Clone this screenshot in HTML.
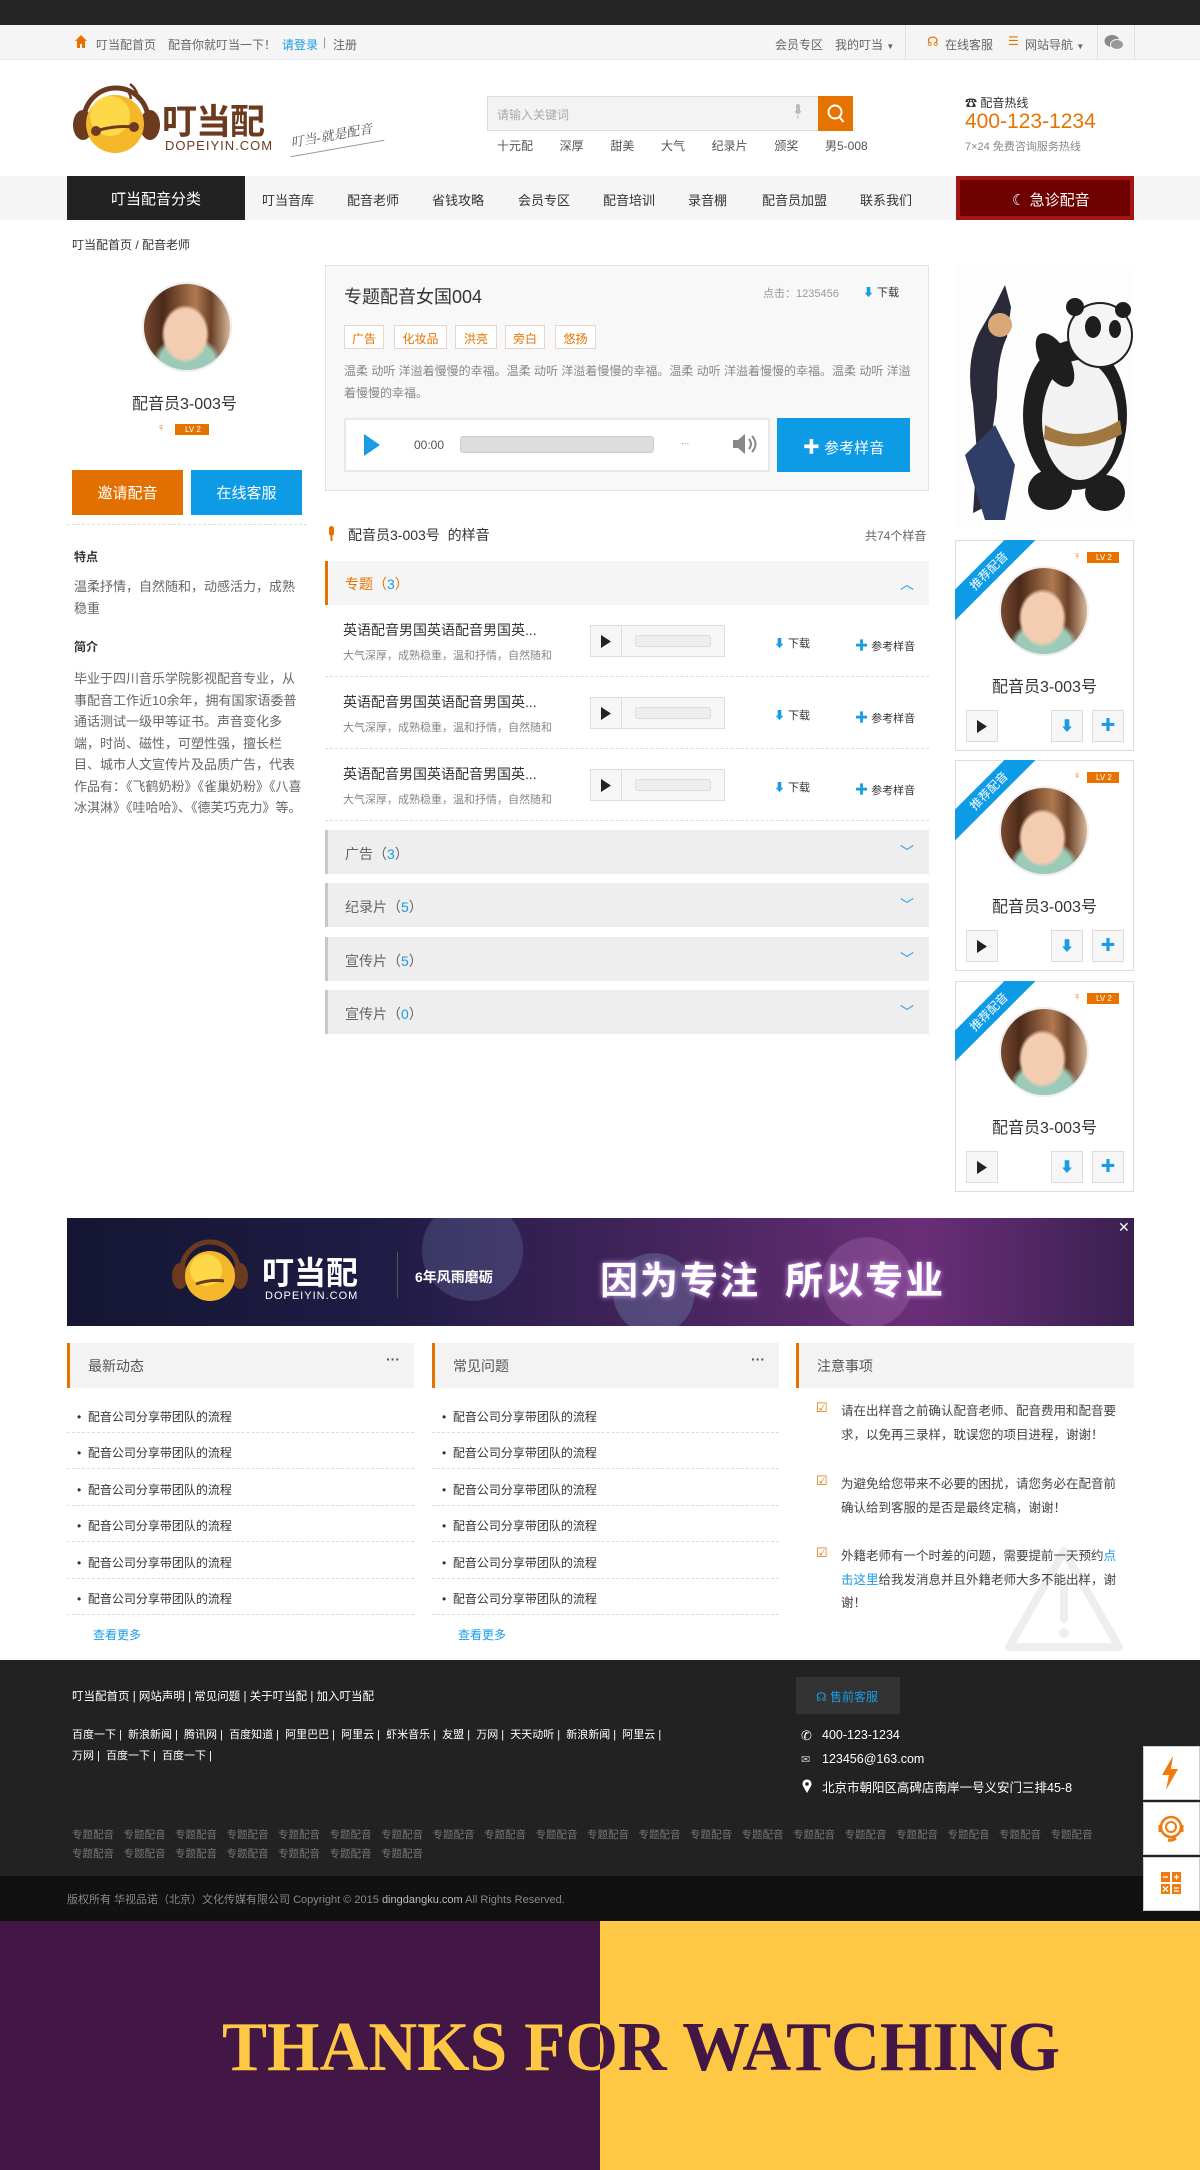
<!DOCTYPE html>
<html><head><meta charset="utf-8">
<style>
*{margin:0;padding:0;box-sizing:border-box}
body{width:1200px;height:2170px;position:relative;overflow:hidden;background:#fff;font-family:"Liberation Sans","Noto Sans CJK SC",sans-serif;color:#333;font-size:12px}
.a{position:absolute;white-space:nowrap}
.av{position:absolute;border-radius:50%;border:2px solid #eee;background:radial-gradient(ellipse 28% 34% at 48% 58%,#f3cdb2 85%,transparent 100%),radial-gradient(ellipse 40% 30% at 50% 90%,#9ccab8 80%,transparent 100%),linear-gradient(90deg,#7a4a30,#4a2a1a 22%,#8a5a3a 45%,#b07a50 60%,#6a4028 78%,#d8b898)}
.blue{color:#1a9be6}
.org{color:#e67300}
.row{position:absolute;left:325px;width:604px;height:72px;border-bottom:1px dashed #ddd}
.sec{position:absolute;left:325px;width:604px;height:44px;background:#eee;border-left:3px solid #c8c8c8;font-size:14px;color:#666;padding:14px 0 0 17px}
.card{position:absolute;left:955px;width:179px;height:211px;border:1px solid #ddd;overflow:hidden;background:#fff}
.btn{position:absolute;width:32px;height:32px;border:1px solid #ddd;background:#f6f6f6;top:170px}
.li{position:absolute;height:36px;border-bottom:1px dashed #ddd;font-size:12px;color:#333;padding-top:11px}
.tg{display:inline-block;width:51.5px;font-size:10.5px;color:#777}
</style></head><body>
<div class="a" style="left:0;top:0;width:1200px;height:25px;background:#262626"></div>
<div class="a" style="left:0;top:25px;width:1200px;height:35px;background:#f5f5f5;border-bottom:1px solid #e8e8e8"></div>
<svg class="a" style="left:75px;top:35px" width="12" height="13" viewBox="0 0 12 13"><path d="M6 0L0 6h2v7h3V9h2v4h3V6h2z" fill="#e67300"/></svg>
<div class="a" style="left:96px;top:36px;color:#666">叮当配首页</div>
<div class="a" style="left:168px;top:36px;color:#666">配音你就叮当一下！</div>
<div class="a" style="left:282px;top:36px;color:#1a9be6">请登录</div>
<div class="a" style="left:323px;top:35px;color:#999">|</div>
<div class="a" style="left:333px;top:36px;color:#666">注册</div>
<div class="a" style="left:775px;top:36px;color:#666">会员专区</div>
<div class="a" style="left:835px;top:36px;color:#666">我的叮当 <span style="font-size:8px">▼</span></div>
<div class="a" style="left:905px;top:25px;width:1px;height:35px;background:#e0e0e0"></div>
<div class="a" style="left:927px;top:34px;color:#e67300;font-size:13px">☊</div>
<div class="a" style="left:945px;top:36px;color:#666">在线客服</div>
<div class="a" style="left:1008px;top:34px;color:#e67300;font-size:12px">☰</div>
<div class="a" style="left:1025px;top:36px;color:#666">网站导航 <span style="font-size:8px">▼</span></div>
<div class="a" style="left:1097px;top:25px;width:1px;height:35px;background:#e0e0e0"></div>
<svg class="a" style="left:1104px;top:34px" width="20" height="17" viewBox="0 0 20 17"><ellipse cx="8" cy="7" rx="7.5" ry="6" fill="#888"/><ellipse cx="13" cy="10.5" rx="6.5" ry="5" fill="#999" stroke="#f5f5f5"/></svg>
<div class="a" style="left:1134px;top:25px;width:1px;height:35px;background:#e0e0e0"></div>

<svg class="a" style="left:70px;top:80px" width="140" height="76" viewBox="0 0 140 76">
<path d="M60 4 q8 6 8 16 M55 8 q5 4 6 11" stroke="#6b3a1f" stroke-width="2.5" fill="none"/>
<path d="M14 40 A32 32 0 0 1 78 40" stroke="#6b3a1f" stroke-width="5" fill="none"/>
<ellipse cx="13" cy="45" rx="10" ry="15" fill="#6b3a1f"/>
<ellipse cx="80" cy="45" rx="10" ry="15" fill="#6b3a1f"/>
<circle cx="45" cy="44" r="29" fill="#f4b82a"/>
<circle cx="40" cy="36" r="20" fill="#ffd84a"/>
<path d="M26 51 q19 -6 38 -4" stroke="#6b3a1f" stroke-width="3" fill="none"/>
<circle cx="26" cy="51" r="5" fill="#6b3a1f"/><circle cx="64" cy="47" r="5" fill="#6b3a1f"/>
</svg>
<div class="a" style="left:162px;top:94px;font-size:35px;font-weight:bold;color:#6b3a1f;letter-spacing:-1px">叮当配</div>
<div class="a" style="left:165px;top:138px;font-size:13px;color:#6b3a1f;letter-spacing:1px">DOPEIYIN.COM</div>
<div class="a" style="left:290px;top:125px;font-size:13px;color:#555;font-style:italic;transform:rotate(-10deg);font-family:'Liberation Serif','Noto Serif CJK SC',serif">叮当-就是配音</div>
<div class="a" style="left:290px;top:148px;width:95px;height:1px;background:#999;transform:rotate(-10deg)"></div>

<div class="a" style="left:487px;top:96px;width:332px;height:35px;background:#f3f3f3;border:1px solid #ddd"></div>
<div class="a" style="left:497px;top:106px;color:#aaa">请输入关键词</div>
<svg class="a" style="left:794px;top:104px" width="8" height="16" viewBox="0 0 8 16"><rect x="2" y="0" width="4" height="9" rx="2" fill="#bbb"/><path d="M1 7q3 5 6 0M4 11v4" stroke="#bbb" fill="none"/></svg>
<div class="a" style="left:818px;top:96px;width:35px;height:35px;background:#e67300"></div>
<svg class="a" style="left:826px;top:103px" width="20" height="21" viewBox="0 0 20 21"><circle cx="9" cy="9" r="6.5" stroke="#fff" stroke-width="2" fill="none"/><path d="M13.5 14l4 5" stroke="#fff" stroke-width="2"/></svg>
<div class="a" style="left:497px;top:137px;color:#555;word-spacing:10px">十元配 &nbsp;深厚 &nbsp;甜美 &nbsp;大气 &nbsp;纪录片 &nbsp;颁奖 &nbsp;男5-008</div>
<div class="a" style="left:965px;top:94px;color:#333">☎ 配音热线</div>
<div class="a" style="left:965px;top:110px;color:#e67300;font-size:21px">400-123-1234</div>
<div class="a" style="left:965px;top:138px;color:#888;font-size:11px">7×24 免费咨询服务热线</div>

<div class="a" style="left:0;top:176px;width:1200px;height:44px;background:#f5f5f5"></div>
<div class="a" style="left:67px;top:176px;width:178px;height:44px;background:#222;color:#fff;font-size:15px;text-align:center;padding-top:12px">叮当配音分类</div>
<div class="a" style="left:262px;top:190px;font-size:13px;color:#333">叮当音库</div>
<div class="a" style="left:347px;top:190px;font-size:13px">配音老师</div>
<div class="a" style="left:432px;top:190px;font-size:13px">省钱攻略</div>
<div class="a" style="left:518px;top:190px;font-size:13px">会员专区</div>
<div class="a" style="left:603px;top:190px;font-size:13px">配音培训</div>
<div class="a" style="left:688px;top:190px;font-size:13px">录音棚</div>
<div class="a" style="left:762px;top:190px;font-size:13px">配音员加盟</div>
<div class="a" style="left:860px;top:190px;font-size:13px">联系我们</div>
<div class="a" style="left:956px;top:176px;width:178px;height:44px;background:#6e0000;border:4px solid #a31616;color:#fff;font-size:15px;padding:9px 0 0 52px">☾ 急诊配音</div>

<div class="a" style="left:72px;top:236px;color:#333">叮当配首页 / 配音老师</div>

<div class="av" style="left:142px;top:282px;width:90px;height:90px"></div>
<div class="a" style="left:132px;top:390px;font-size:16px;color:#333">配音员3-003号</div>
<div class="a" style="left:157px;top:422px;font-size:11px;color:#e67300">♀</div>
<div class="a" style="left:175px;top:424px;width:34px;height:11px;background:#e67300;color:#fff;font-size:8px;padding-left:10px;line-height:11px">LV 2</div>
<div class="a" style="left:72px;top:470px;width:111px;height:45px;background:#e27000;color:#fff;font-size:15px;text-align:center;padding-top:12px">邀请配音</div>
<div class="a" style="left:191px;top:470px;width:111px;height:45px;background:#0e9be6;color:#fff;font-size:15px;text-align:center;padding-top:12px">在线客服</div>
<div class="a" style="left:67px;top:524px;width:240px;border-top:1px dashed #ddd"></div>
<div class="a" style="left:74px;top:548px;font-weight:bold;font-size:12px">特点</div>
<div class="a" style="left:74px;top:576px;width:230px;white-space:normal;font-size:13px;color:#666;line-height:21.5px">温柔抒情，自然随和，动感活力，成熟稳重</div>
<div class="a" style="left:74px;top:638px;font-weight:bold;font-size:12px">简介</div>
<div class="a" style="left:74px;top:668px;width:230px;white-space:normal;font-size:13px;color:#666;line-height:21.5px">毕业于四川音乐学院影视配音专业，从事配音工作近10余年，拥有国家语委普通话测试一级甲等证书。声音变化多端，时尚、磁性，可塑性强，擅长栏目、城市人文宣传片及品质广告，代表作品有：《飞鹤奶粉》《雀巢奶粉》《八喜冰淇淋》《哇哈哈》、《德芙巧克力》等。</div>

<div class="a" style="left:325px;top:265px;width:604px;height:226px;background:#f8f8f8;border:1px solid #e3e3e3"></div>
<div class="a" style="left:344px;top:283px;font-size:18px;color:#333">专题配音女国004</div>
<div class="a" style="left:763px;top:285px;font-size:11px;color:#999">点击：1235456</div>
<div class="a" style="left:863px;top:284px;font-size:11px;color:#333"><span class="blue">⬇</span> 下载</div>
<div class="a" style="left:344px;top:325px;width:40px;height:24px;border:1px solid #e6d6cc;background:#fff;color:#e67300;text-align:center;padding-top:4px">广告</div>
<div class="a" style="left:394px;top:325px;width:53px;height:24px;border:1px solid #e6d6cc;background:#fff;color:#e67300;text-align:center;padding-top:4px">化妆品</div>
<div class="a" style="left:455px;top:325px;width:42px;height:24px;border:1px solid #e6d6cc;background:#fff;color:#e67300;text-align:center;padding-top:4px">洪亮</div>
<div class="a" style="left:505px;top:325px;width:40px;height:24px;border:1px solid #e6d6cc;background:#fff;color:#e67300;text-align:center;padding-top:4px">旁白</div>
<div class="a" style="left:555px;top:325px;width:41px;height:24px;border:1px solid #e6d6cc;background:#fff;color:#e67300;text-align:center;padding-top:4px">悠扬</div>
<div class="a" style="left:344px;top:361px;width:570px;white-space:normal;color:#888;line-height:21.5px">温柔 动听 洋溢着慢慢的幸福。温柔 动听 洋溢着慢慢的幸福。温柔 动听 洋溢着慢慢的幸福。温柔 动听 洋溢着慢慢的幸福。</div>
<div class="a" style="left:344px;top:418px;width:426px;height:54px;background:#fff;border:2px solid #e8e8e8"></div>
<svg class="a" style="left:364px;top:434px" width="16" height="22"><path d="M0 0L16 11L0 22z" fill="#1a9be6"/></svg>
<div class="a" style="left:414px;top:438px;color:#555;font-size:12px">00:00</div>
<div class="a" style="left:460px;top:436px;width:194px;height:17px;background:#ddd;border:1px solid #ccc;border-radius:3px"></div>
<div class="a" style="left:681px;top:436px;color:#999;font-size:10px">...</div>
<svg class="a" style="left:732px;top:433px" width="28" height="22" viewBox="0 0 28 22"><path d="M1 7h5l7-6v20l-7-6H1z" fill="#888"/><path d="M17 6q4 5 0 10M20 3q7 8 0 16" stroke="#888" stroke-width="2" fill="none"/></svg>
<div class="a" style="left:777px;top:418px;width:133px;height:54px;background:#0e9be6;color:#fff;font-size:15px;text-align:center;padding-top:15px"><b style="font-size:17px">✚</b> 参考样音</div>

<svg class="a" style="left:328px;top:526px" width="8" height="16"><rect x="1" y="0" width="5" height="10" rx="2.5" fill="#e67300"/><path d="M3.5 10v5" stroke="#e67300" stroke-width="2"/></svg>
<div class="a" style="left:348px;top:525px;font-size:14px;color:#333">配音员3-003号 &nbsp;的样音</div>
<div class="a" style="left:865px;top:527px;color:#666">共74个样音</div>
<div class="a" style="left:325px;top:561px;width:604px;height:44px;background:#f5f5f5;border-left:3px solid #e67300;font-size:14px;color:#e67300;padding:13px 0 0 17px">专题（<span class="blue">3</span>）</div>
<div class="a" style="left:900px;top:574px;color:#1a9be6;font-size:14px">︿</div>

<div class="row" style="top:605px"></div>
<div class="row" style="top:677px"></div>
<div class="row" style="top:749px"></div>

<div class="a" style="left:343px;top:620px;font-size:14px">英语配音男国英语配音男国英...</div>
<div class="a" style="left:343px;top:647px;font-size:11px;color:#888">大气深厚，成熟稳重，温和抒情，自然随和</div>
<div class="a" style="left:343px;top:692px;font-size:14px">英语配音男国英语配音男国英...</div>
<div class="a" style="left:343px;top:719px;font-size:11px;color:#888">大气深厚，成熟稳重，温和抒情，自然随和</div>
<div class="a" style="left:343px;top:764px;font-size:14px">英语配音男国英语配音男国英...</div>
<div class="a" style="left:343px;top:791px;font-size:11px;color:#888">大气深厚，成熟稳重，温和抒情，自然随和</div>

<div class="a" style="left:590px;top:625px;width:135px;height:32px;border:1px solid #ddd;background:#f6f6f6"><div style="position:absolute;left:30px;top:0;width:1px;height:30px;background:#ddd"></div><svg style="position:absolute;left:10px;top:9px" width="10" height="13"><path d="M0 0L10 6.5L0 13z" fill="#222"/></svg><div style="position:absolute;left:44px;top:9px;width:76px;height:12px;border:1px solid #ddd;border-radius:3px;background:#eee"></div></div>
<div class="a" style="left:590px;top:697px;width:135px;height:32px;border:1px solid #ddd;background:#f6f6f6"><div style="position:absolute;left:30px;top:0;width:1px;height:30px;background:#ddd"></div><svg style="position:absolute;left:10px;top:9px" width="10" height="13"><path d="M0 0L10 6.5L0 13z" fill="#222"/></svg><div style="position:absolute;left:44px;top:9px;width:76px;height:12px;border:1px solid #ddd;border-radius:3px;background:#eee"></div></div>
<div class="a" style="left:590px;top:769px;width:135px;height:32px;border:1px solid #ddd;background:#f6f6f6"><div style="position:absolute;left:30px;top:0;width:1px;height:30px;background:#ddd"></div><svg style="position:absolute;left:10px;top:9px" width="10" height="13"><path d="M0 0L10 6.5L0 13z" fill="#222"/></svg><div style="position:absolute;left:44px;top:9px;width:76px;height:12px;border:1px solid #ddd;border-radius:3px;background:#eee"></div></div>
<div class="a" style="left:774px;top:635px;font-size:11px"><span class="blue">⬇</span> 下载</div>
<div class="a" style="left:855px;top:635px;font-size:11px"><b class="blue" style="font-size:13px">✚</b> 参考样音</div>
<div class="a" style="left:774px;top:707px;font-size:11px"><span class="blue">⬇</span> 下载</div>
<div class="a" style="left:855px;top:707px;font-size:11px"><b class="blue" style="font-size:13px">✚</b> 参考样音</div>
<div class="a" style="left:774px;top:779px;font-size:11px"><span class="blue">⬇</span> 下载</div>
<div class="a" style="left:855px;top:779px;font-size:11px"><b class="blue" style="font-size:13px">✚</b> 参考样音</div>

<div class="sec" style="top:830px">广告（<span class="blue">3</span>）</div>
<div class="sec" style="top:883px">纪录片（<span class="blue">5</span>）</div>
<div class="sec" style="top:937px">宣传片（<span class="blue">5</span>）</div>
<div class="sec" style="top:990px">宣传片（<span class="blue">0</span>）</div>
<div class="a" style="left:900px;top:842px;color:#1a9be6;font-size:14px">﹀</div>
<div class="a" style="left:900px;top:895px;color:#1a9be6;font-size:14px">﹀</div>
<div class="a" style="left:900px;top:949px;color:#1a9be6;font-size:14px">﹀</div>
<div class="a" style="left:900px;top:1002px;color:#1a9be6;font-size:14px">﹀</div>

<svg class="a" style="left:955px;top:265px" width="179" height="262" viewBox="0 0 179 262">
<rect width="179" height="262" fill="#fdfdfd"/>
<path d="M40 40 l10 -20 l6 22 l-4 30 q-10 20 -10 60 l-8 60 l-4 50 l-12 6 l4 -60 l-4 -50 q-8 -40 6 -70z" fill="#2a2a3a"/>
<circle cx="45" cy="60" r="12" fill="#d9a878"/>
<path d="M10 190 l30 -30 l20 40 l-10 55 l-20 0z" fill="#2e3e66"/>
<ellipse cx="120" cy="150" rx="52" ry="75" fill="#1e1e1e"/>
<ellipse cx="125" cy="155" rx="38" ry="60" fill="#f2f2f2"/>
<path d="M90 160 q35 20 75 -5 l2 14 q-40 22 -78 5z" fill="#a07840"/>
<circle cx="145" cy="70" r="32" fill="#f5f5f5" stroke="#222" stroke-width="2"/>
<ellipse cx="138" cy="62" rx="8" ry="11" fill="#1e1e1e"/><ellipse cx="160" cy="64" rx="6" ry="9" fill="#1e1e1e"/>
<circle cx="120" cy="42" r="9" fill="#1e1e1e"/><circle cx="168" cy="45" r="8" fill="#1e1e1e"/>
<ellipse cx="100" cy="95" rx="14" ry="30" fill="#1e1e1e" transform="rotate(-30 100 95)"/>
<ellipse cx="95" cy="225" rx="22" ry="20" fill="#1e1e1e"/><ellipse cx="150" cy="228" rx="20" ry="18" fill="#1e1e1e"/>
</svg>

<div class="card" style="top:540px"></div>
<div class="card" style="top:760px"></div>
<div class="card" style="top:981px"></div>

<div class="a" style="left:955px;top:540px;width:179px;height:211px;overflow:hidden">
<div style="position:absolute;left:-36px;top:20px;width:140px;height:22px;background:#0e9be6;color:#fff;text-align:center;font-size:12px;line-height:22px;transform:rotate(-45deg)">推荐配音</div>
<div style="position:absolute;left:118px;top:10px;font-size:11px;color:#e67300">♀</div>
<div style="position:absolute;left:132px;top:12px;width:32px;height:11px;background:#e67300;color:#fff;font-size:8px;line-height:11px;padding-left:9px">LV 2</div>
<div class="av" style="left:44px;top:26px;width:90px;height:90px"></div>
<div style="position:absolute;left:0;width:179px;top:133px;text-align:center;font-size:16px;color:#333">配音员3-003号</div>
<div class="btn" style="left:11px"><svg style="position:absolute;left:10px;top:9px" width="10" height="13"><path d="M0 0L10 6.5L0 13z" fill="#222"/></svg></div>
<div class="btn" style="left:96px;color:#1a9be6;text-align:center;font-size:14px;line-height:30px">⬇</div>
<div class="btn" style="left:137px;color:#1a9be6;text-align:center;font-size:15px;line-height:30px;font-weight:bold">✚</div>
</div>
<div class="a" style="left:955px;top:760px;width:179px;height:211px;overflow:hidden">
<div style="position:absolute;left:-36px;top:20px;width:140px;height:22px;background:#0e9be6;color:#fff;text-align:center;font-size:12px;line-height:22px;transform:rotate(-45deg)">推荐配音</div>
<div style="position:absolute;left:118px;top:10px;font-size:11px;color:#e67300">♀</div>
<div style="position:absolute;left:132px;top:12px;width:32px;height:11px;background:#e67300;color:#fff;font-size:8px;line-height:11px;padding-left:9px">LV 2</div>
<div class="av" style="left:44px;top:26px;width:90px;height:90px"></div>
<div style="position:absolute;left:0;width:179px;top:133px;text-align:center;font-size:16px;color:#333">配音员3-003号</div>
<div class="btn" style="left:11px"><svg style="position:absolute;left:10px;top:9px" width="10" height="13"><path d="M0 0L10 6.5L0 13z" fill="#222"/></svg></div>
<div class="btn" style="left:96px;color:#1a9be6;text-align:center;font-size:14px;line-height:30px">⬇</div>
<div class="btn" style="left:137px;color:#1a9be6;text-align:center;font-size:15px;line-height:30px;font-weight:bold">✚</div>
</div>
<div class="a" style="left:955px;top:981px;width:179px;height:211px;overflow:hidden">
<div style="position:absolute;left:-36px;top:20px;width:140px;height:22px;background:#0e9be6;color:#fff;text-align:center;font-size:12px;line-height:22px;transform:rotate(-45deg)">推荐配音</div>
<div style="position:absolute;left:118px;top:10px;font-size:11px;color:#e67300">♀</div>
<div style="position:absolute;left:132px;top:12px;width:32px;height:11px;background:#e67300;color:#fff;font-size:8px;line-height:11px;padding-left:9px">LV 2</div>
<div class="av" style="left:44px;top:26px;width:90px;height:90px"></div>
<div style="position:absolute;left:0;width:179px;top:133px;text-align:center;font-size:16px;color:#333">配音员3-003号</div>
<div class="btn" style="left:11px"><svg style="position:absolute;left:10px;top:9px" width="10" height="13"><path d="M0 0L10 6.5L0 13z" fill="#222"/></svg></div>
<div class="btn" style="left:96px;color:#1a9be6;text-align:center;font-size:14px;line-height:30px">⬇</div>
<div class="btn" style="left:137px;color:#1a9be6;text-align:center;font-size:15px;line-height:30px;font-weight:bold">✚</div>
</div>

<div class="a" style="left:67px;top:1218px;width:1067px;height:108px;background:radial-gradient(circle at 55% 70%,rgba(120,140,180,.35) 0 40px,transparent 41px),radial-gradient(circle at 38% 30%,rgba(110,120,170,.3) 0 50px,transparent 51px),radial-gradient(circle at 75% 60%,rgba(170,110,180,.35) 0 45px,transparent 46px),linear-gradient(90deg,#141633 0%,#1f1c45 30%,#4a2660 60%,#6a2e78 80%,#3a2050 100%)"></div>
<svg class="a" style="left:170px;top:1238px" width="80" height="70" viewBox="0 0 80 70"><ellipse cx="10" cy="38" rx="8" ry="13" fill="#6b3a1f"/><ellipse cx="70" cy="38" rx="8" ry="13" fill="#6b3a1f"/><path d="M12 32A28 28 0 0 1 68 32" stroke="#6b3a1f" stroke-width="5" fill="none"/><circle cx="40" cy="38" r="25" fill="#f4b82a"/><circle cx="36" cy="32" r="16" fill="#ffd84a"/><path d="M26 46q15-5 28-3" stroke="#6b3a1f" stroke-width="3" fill="none"/></svg>
<div class="a" style="left:262px;top:1248px;color:#fff;font-size:32px;font-weight:bold">叮当配</div>
<div class="a" style="left:265px;top:1290px;color:#fff;font-size:11px;letter-spacing:1px">DOPEIYIN.COM</div>
<div class="a" style="left:397px;top:1252px;width:1px;height:46px;background:#555"></div>
<div class="a" style="left:415px;top:1267px;color:#fff;font-size:14px;font-weight:bold">6年风雨磨砺</div>
<div class="a" style="left:600px;top:1250px;color:#fff;font-size:38px;font-weight:bold;letter-spacing:2px;text-shadow:0 0 6px #d8a0ff">因为专注 &nbsp;所以专业</div>
<div class="a" style="left:1118px;top:1219px;color:#fff;font-size:14px">✕</div>

<div class="a" style="left:67px;top:1343px;width:347px;height:45px;background:#f3f3f3;border-left:3px solid #e67300;font-size:14px;color:#555;padding:13px 0 0 18px">最新动态<span style="position:absolute;right:14px;top:8px;font-weight:bold">···</span></div>
<div class="a" style="left:432px;top:1343px;width:347px;height:45px;background:#f3f3f3;border-left:3px solid #e67300;font-size:14px;color:#555;padding:13px 0 0 18px">常见问题<span style="position:absolute;right:14px;top:8px;font-weight:bold">···</span></div>
<div class="a" style="left:796px;top:1343px;width:338px;height:45px;background:#f3f3f3;border-left:3px solid #e67300;font-size:14px;color:#555;padding:13px 0 0 18px">注意事项</div>

<div class="li" style="left:67px;top:1397px;width:347px;padding-left:10px">• &nbsp;配音公司分享带团队的流程</div>
<div class="li" style="left:67px;top:1433px;width:347px;padding-left:10px">• &nbsp;配音公司分享带团队的流程</div>
<div class="li" style="left:67px;top:1470px;width:347px;padding-left:10px">• &nbsp;配音公司分享带团队的流程</div>
<div class="li" style="left:67px;top:1506px;width:347px;padding-left:10px">• &nbsp;配音公司分享带团队的流程</div>
<div class="li" style="left:67px;top:1543px;width:347px;padding-left:10px">• &nbsp;配音公司分享带团队的流程</div>
<div class="li" style="left:67px;top:1579px;width:347px;padding-left:10px">• &nbsp;配音公司分享带团队的流程</div>
<div class="li" style="left:432px;top:1397px;width:347px;padding-left:10px">• &nbsp;配音公司分享带团队的流程</div>
<div class="li" style="left:432px;top:1433px;width:347px;padding-left:10px">• &nbsp;配音公司分享带团队的流程</div>
<div class="li" style="left:432px;top:1470px;width:347px;padding-left:10px">• &nbsp;配音公司分享带团队的流程</div>
<div class="li" style="left:432px;top:1506px;width:347px;padding-left:10px">• &nbsp;配音公司分享带团队的流程</div>
<div class="li" style="left:432px;top:1543px;width:347px;padding-left:10px">• &nbsp;配音公司分享带团队的流程</div>
<div class="li" style="left:432px;top:1579px;width:347px;padding-left:10px">• &nbsp;配音公司分享带团队的流程</div>
<div class="a blue" style="left:93px;top:1626px">查看更多</div>
<div class="a blue" style="left:458px;top:1626px">查看更多</div>

<svg class="a" style="left:1003px;top:1545px" width="122" height="108" viewBox="0 0 122 108"><path d="M61 6L116 102H6z" stroke="#eee" stroke-width="8" fill="none" stroke-linejoin="round"/><path d="M61 36v38" stroke="#eee" stroke-width="8" stroke-linecap="round"/><circle cx="61" cy="88" r="5" fill="#eee"/></svg>
<div class="a org" style="left:816px;top:1400px;font-size:13px">☑</div>
<div class="a org" style="left:816px;top:1473px;font-size:13px">☑</div>
<div class="a org" style="left:816px;top:1545px;font-size:13px">☑</div>
<div class="a" style="left:841px;top:1400px;width:280px;white-space:normal;font-size:12.5px;color:#444;line-height:23.5px">请在出样音之前确认配音老师、配音费用和配音要求，以免再三录样，耽误您的项目进程，谢谢！</div>
<div class="a" style="left:841px;top:1473px;width:280px;white-space:normal;font-size:12.5px;color:#444;line-height:23.5px">为避免给您带来不必要的困扰，请您务必在配音前确认给到客服的是否是最终定稿，谢谢！</div>
<div class="a" style="left:841px;top:1545px;width:280px;white-space:normal;font-size:12.5px;color:#444;line-height:23.5px">外籍老师有一个时差的问题，需要提前一天预约<span class="blue">点击这里</span>给我发消息并且外籍老师大多不能出样，谢谢！</div>

<div class="a" style="left:0;top:1660px;width:1200px;height:216px;background:#222"></div>
<div class="a" style="left:72px;top:1688px;color:#fff;font-size:11.5px">叮当配首页 | 网站声明 | 常见问题 | 关于叮当配 | 加入叮当配</div>
<div class="a" style="left:72px;top:1726px;color:#fff;font-size:11px">百度一下 | &nbsp;新浪新闻 | &nbsp;腾讯网 | &nbsp;百度知道 | &nbsp;阿里巴巴 | &nbsp;阿里云 | &nbsp;虾米音乐 | &nbsp;友盟 | &nbsp;万网 | &nbsp;天天动听 | &nbsp;新浪新闻 | &nbsp;阿里云 |</div>
<div class="a" style="left:72px;top:1747px;color:#fff;font-size:11px">万网 | &nbsp;百度一下 | &nbsp;百度一下 |</div>
<div class="a" style="left:796px;top:1677px;width:104px;height:37px;background:#333;color:#1a9be6;font-size:12px;padding:11px 0 0 20px">☊ 售前客服</div>
<div class="a" style="left:801px;top:1728px;color:#fff;font-size:13px">✆</div>
<div class="a" style="left:822px;top:1728px;color:#fff;font-size:12.5px">400-123-1234</div>
<div class="a" style="left:801px;top:1753px;color:#ccc;font-size:11px">✉</div>
<div class="a" style="left:822px;top:1752px;color:#fff;font-size:12.5px">123456@163.com</div>
<svg class="a" style="left:802px;top:1779px" width="10" height="14"><path d="M5 14L1 7a4.5 4.5 0 1 1 8 0z" fill="#fff"/><circle cx="5" cy="5" r="1.8" fill="#222"/></svg>
<div class="a" style="left:822px;top:1777px;color:#fff;font-size:12.5px">北京市朝阳区高碑店南岸一号义安门三排45-8</div>
<div class="a" style="left:72px;top:1825px;width:1060px;white-space:normal;line-height:18px"><span class="tg">专题配音</span><span class="tg">专题配音</span><span class="tg">专题配音</span><span class="tg">专题配音</span><span class="tg">专题配音</span><span class="tg">专题配音</span><span class="tg">专题配音</span><span class="tg">专题配音</span><span class="tg">专题配音</span><span class="tg">专题配音</span><span class="tg">专题配音</span><span class="tg">专题配音</span><span class="tg">专题配音</span><span class="tg">专题配音</span><span class="tg">专题配音</span><span class="tg">专题配音</span><span class="tg">专题配音</span><span class="tg">专题配音</span><span class="tg">专题配音</span><span class="tg">专题配音</span><br><span class="tg">专题配音</span><span class="tg">专题配音</span><span class="tg">专题配音</span><span class="tg">专题配音</span><span class="tg">专题配音</span><span class="tg">专题配音</span><span class="tg">专题配音</span></div>
<div class="a" style="left:0;top:1876px;width:1200px;height:45px;background:#111"></div>
<div class="a" style="left:67px;top:1891px;color:#888;font-size:11px">版权所有 华视品诺（北京）文化传媒有限公司 Copyright © 2015 <span style="color:#bbb">dingdangku.com</span> All Rights Reserved.</div>

<div class="a" style="left:1143px;top:1746px;width:57px;height:54px;background:#fff;border:1px solid #ccc"></div>
<svg class="a" style="left:1160px;top:1756px" width="20" height="34" viewBox="0 0 20 34"><path d="M13 0L2 19h7l-3 15L18 13h-7z" fill="#f07a10"/></svg>
<div class="a" style="left:1143px;top:1802px;width:57px;height:53px;background:#fff;border:1px solid #ccc"></div>
<svg class="a" style="left:1156px;top:1812px" width="30" height="32" viewBox="0 0 30 32"><circle cx="15" cy="15" r="10" stroke="#f07a10" stroke-width="2.5" fill="none"/><circle cx="15" cy="15" r="5" stroke="#f07a10" stroke-width="2" fill="none"/><path d="M4 13v7M26 13v7M20 26q-4 3-8 2" stroke="#f07a10" stroke-width="3" fill="none"/></svg>
<div class="a" style="left:1143px;top:1857px;width:57px;height:54px;background:#fff;border:1px solid #ccc"></div>
<svg class="a" style="left:1161px;top:1872px" width="20" height="22" viewBox="0 0 20 22"><rect x="0" y="0" width="9" height="10" fill="#f07a10"/><rect x="11" y="0" width="9" height="10" fill="#f07a10"/><rect x="0" y="12" width="9" height="10" fill="#f07a10"/><rect x="11" y="12" width="9" height="10" fill="#f07a10"/><path d="M2 5h5M13 5h5M15.5 2.5v5M2 14.5l5 5M7 14.5l-5 5M13 16h5M13 19h5" stroke="#fff" stroke-width="1.3"/></svg>

<div class="a" style="left:0;top:1921px;width:600px;height:249px;background:#421645"></div>
<div class="a" style="left:600px;top:1921px;width:600px;height:249px;background:#fec844"></div>
<svg class="a" style="left:0;top:1921px" width="1200" height="249">
<defs><clipPath id="cl"><rect x="0" y="0" width="600" height="249"/></clipPath><clipPath id="cr"><rect x="600" y="0" width="600" height="249"/></clipPath></defs>
<text x="222" y="149" textLength="838" lengthAdjust="spacingAndGlyphs" font-family="Liberation Serif, serif" font-weight="bold" font-size="70" fill="#fec844" clip-path="url(#cl)">THANKS FOR WATCHING</text>
<text x="222" y="149" textLength="838" lengthAdjust="spacingAndGlyphs" font-family="Liberation Serif, serif" font-weight="bold" font-size="70" fill="#421645" clip-path="url(#cr)">THANKS FOR WATCHING</text>
</svg>
</body></html>
